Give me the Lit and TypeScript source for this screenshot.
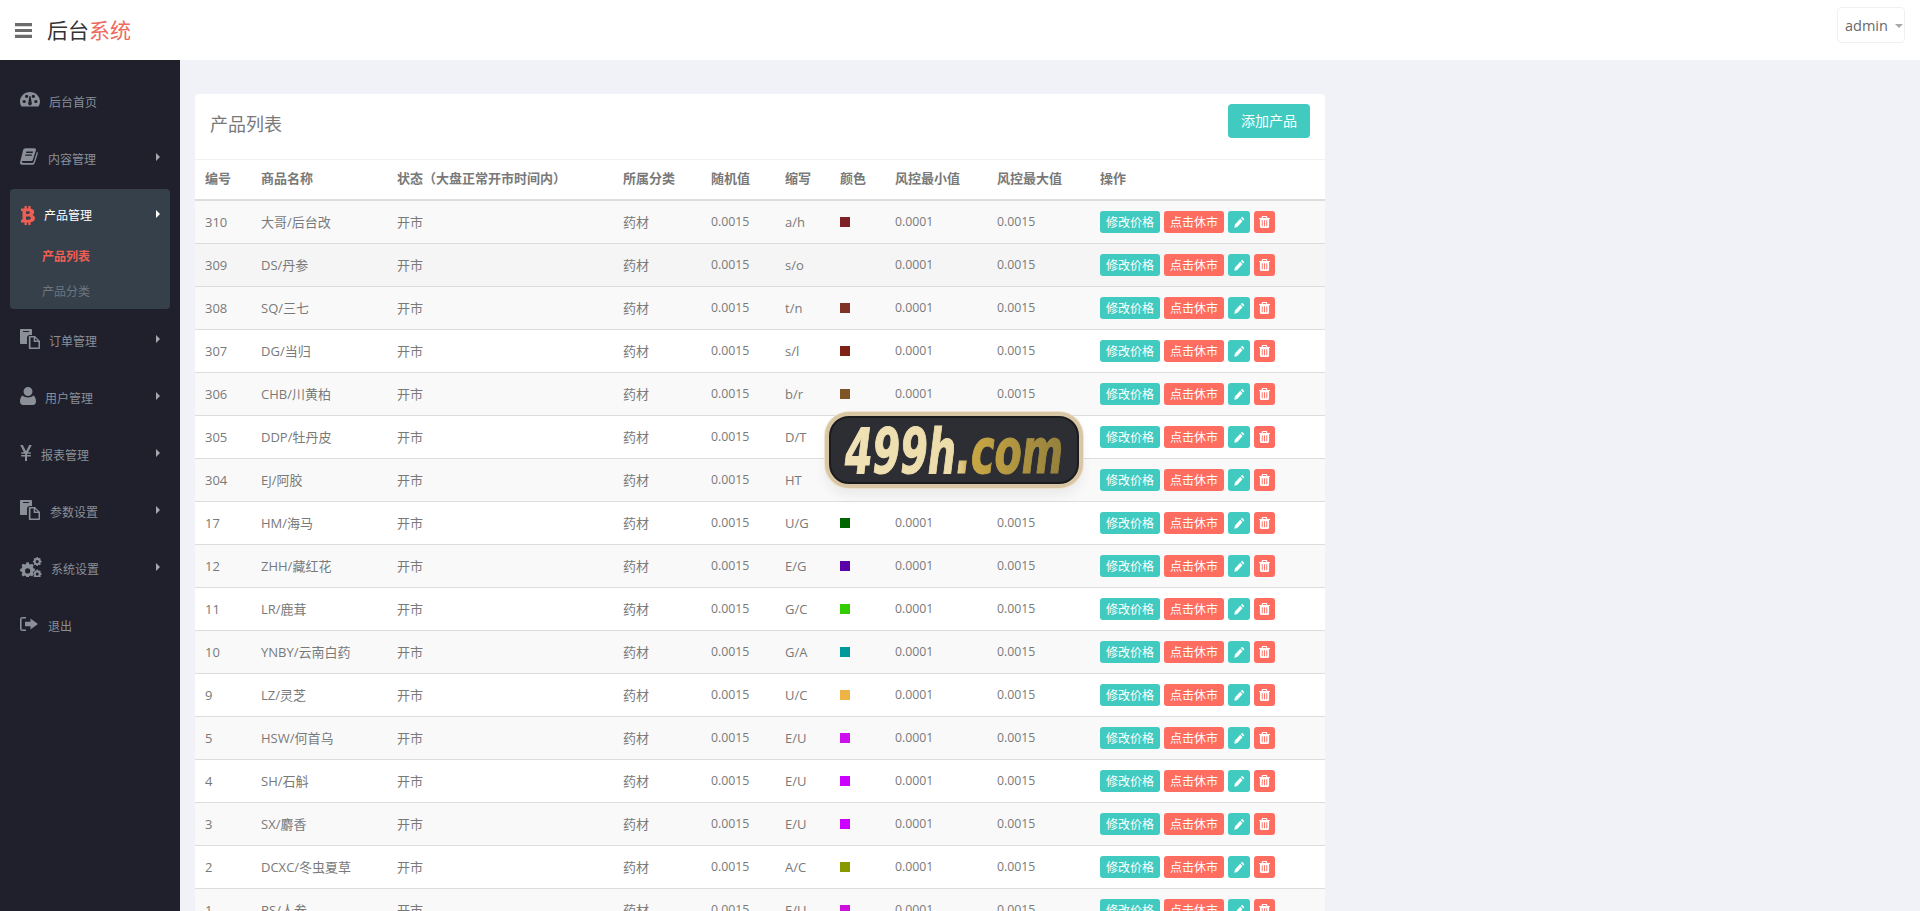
import { LitElement, html, css, svg } from "lit";
import { customElement } from "lit/decorators.js";

const ICONS: Record<string, { box: string; d: string }> = {
  bars: { box: "2 4 20 16", d: "M2 4h20v3.4H2zM2 10.300h20v3.4H2zM2 16.600h20V20H2z" },
  dashboard: {
    box: "0 1 24 19",
    d: "M12 1C5.4 1 0 6.4 0 13c0 2.3.7 4.500 1.800 6.300h20.400C23.300 17.500 24 15.300 24 13c0-6.600-5.400-12-12-12zM5 15a2 2 0 1 1 0-4 2 2 0 0 1 0 4zm3-6.500a2 2 0 1 1 0-4 2 2 0 0 1 0 4zm5.600 8.700a2.3 2.3 0 0 1-3.200 0c-.7-.7-.8-1.700-.4-2.500L11.200 6.500h1.600l1.200 8.200c.4.8.3 1.800-.4 2.500zM16 8.500a2 2 0 1 1 0-4 2 2 0 0 1 0 4zm3 6.500a2 2 0 1 1 0-4 2 2 0 0 1 0 4z",
  },
  book: {
    box: "0 0 20 20",
    d: "M19.300 4.500c.5.6.6 1.400.4 2.200l-3.300 10.800c-.4 1.300-1.700 2.300-3 2.300H2.600C1.300 19.800.2 18.900 0 17.700c0-.4 0-.7.1-1L3.400 2.500C3.700 1.200 4.900.2 6.200.2H16c1.100 0 2 .9 1.800 2l-3.300 11c-.5 1.600-1 2.200-2.500 2.200H2.900c-.3 0-.6.1-.7.3-.2.3-.2.5-.1.9.2.8 1 1 1.700 1h10c.6 0 1.100-.4 1.300-.9l3.400-11.200c.1-.4 0-.7-.1-1 .4.1.7.3.9.5zM7 4.500l-.3 1c0 .2 0 .3.2.3h6.700c.2 0 .4-.1.5-.3l.3-1c0-.2 0-.3-.2-.3H7.500c-.2 0-.4.1-.5.3zM6 7.800l-.3 1c0 .2 0 .3.2.3h6.700c.2 0 .4-.1.5-.3l.3-1c0-.2 0-.3-.2-.3H6.500c-.2 0-.4.1-.5.3z",
  },
  bitcoin: {
    box: "0 0 14 20",
    d: "M3.500 0h2.300v2.500h1.500V0h2.300v2.700c2.200.4 3.600 1.700 3.600 3.700 0 1.400-.6 2.400-1.700 3 1.600.5 2.500 1.800 2.500 3.500 0 2.400-1.800 3.900-4.400 4.200V20H7.300v-2.700H5.800V20H3.500v-2.700H0v-2.700h1.500V5.200H0V2.500h3.500zM5 5.400v3h2.300c1 0 1.600-.6 1.600-1.500s-.6-1.500-1.600-1.500zm0 5.600v3.500h2.900c1.200 0 1.900-.7 1.900-1.800S9.100 11 7.900 11z",
  },
  files: {
    box: "0 0 20 20",
    d: "M1 0h10c.6 0 1 .4 1 1v5H9.800C8.300 6 7 7.200 7 8.800V15H1c-.6 0-1-.4-1-1V1c0-.6.4-1 1-1zm2 2v1h6V2zM9.800 7H15l5 5v7c0 .6-.4 1-1 1H9.800c-.6 0-1-.4-1-1V8c0-.6.4-1 1-1zm.7 1.600v9.800h8V13h-4.800V8.600zm4.700.3v2.600h2.600z",
  },
  user: {
    box: "0 0 18 20",
    d: "M9 0a5 5 0 0 1 5 5 5 5 0 0 1-10 0 5 5 0 0 1 5-5zM3.200 9.500C4.600 11 6.600 11.700 9 11.700s4.400-.7 5.800-2.200C17 10 18 13 18 16.500c0 2.200-1.400 3.500-3.500 3.500h-11C1.400 20 0 18.700 0 16.500 0 13 1 10 3.200 9.500z",
  },
  yen: {
    box: "0 0 12 16",
    d: "M.2 0h2.600l3.200 6.300L9.200 0h2.600L8.100 7.300h2.700v1.500H7v1.100h3.800v1.500H7V16H5v-4.600H1.200V9.900H5V8.800H1.200V7.300h2.700z",
  },
  cogs: {
    box: "0 0 23 20",
    d: "M6.800 5.200h2.300l.6 1.800 1.300.5 1.700-.8 1.600 1.600-.8 1.700.5 1.300 1.800.6v2.300l-1.800.6-.5 1.300.8 1.700-1.600 1.600-1.700-.8-1.300.5-.6 1.800H6.800l-.6-1.800-1.300-.5-1.700.8-1.600-1.600.8-1.700-.5-1.300-1.800-.6v-2.300l1.800-.6.5-1.300-.8-1.700 1.600-1.600 1.700.8 1.300-.5zM8 11.200a2.700 2.700 0 1 0 0 5.400 2.700 2.700 0 0 0 0-5.400zM17.400 0h1.300l.3 1 .8.3 1-.4.900.9-.4 1 .3.8 1 .3v1.300l-1 .3-.3.8.4 1-.9.9-1-.4-.8.3-.3 1h-1.300l-.3-1-.8-.3-1 .4-.9-.9.4-1-.3-.8-1-.3V3.900l1-.3.3-.8-.4-1 .9-.9 1 .4.8-.3zM18 3a1.600 1.600 0 1 0 0 3.200A1.600 1.600 0 0 0 18 3zm-.6 9.500h1.300l.3 1 .8.3 1-.4.9.9-.4 1 .3.8 1 .3v1.300l-1 .3-.3.8.4 1-.9.9-1-.4-.8.3-.3 1h-1.300l-.3-1-.8-.3-1 .4-.9-.9.4-1-.3-.8-1-.3v-1.300l1-.3.3-.8-.4-1 .9-.9 1 .4.8-.3zm.6 3a1.600 1.600 0 1 0 0 3.200 1.600 1.600 0 0 0 0-3.200z",
  },
  signout: {
    box: "0 0 18 15",
    d: "M2.500 0H6v1.600H2.600c-.6 0-1 .4-1 1v9.800c0 .6.4 1 1 1H6V15H2.500A2.500 2.500 0 0 1 0 12.500v-10A2.500 2.500 0 0 1 2.500 0zM10.500 1.500L18 7.500l-7.500 6V10H5V5h5.500z",
  },
  pencil: {
    box: "0 0 14 14",
    d: "M10.300.8l2.900 2.900-1.500 1.500-2.900-2.900zM7.900 3.200l2.900 2.900-6.700 6.700L.4 13.600l.8-3.700z",
  },
  trash: {
    box: "0 0 12 14",
    d: "M4 0h4c.6 0 1 .4 1 1v1.400h3v1.200h-1v9c0 .8-.6 1.400-1.300 1.400H2.300C1.600 14 1 13.400 1 12.600v-9H0V2.400h3V1c0-.6.4-1 1-1zm.2 1.200v1.200h3.600V1.200zM3 5v7h1V5zm2.500 0v7h1V5zM8 5v7h1V5z",
  },
};

const icon = (name: string, cls = "") => html`<svg class="ic ${cls}" viewBox=${ICONS[name].box} preserveAspectRatio="none" fill="currentColor" aria-hidden="true">${svg`<path fill-rule="evenodd" d=${ICONS[name].d}></path>`}</svg>`;

const NAV_TOP = [
  { ic: "dashboard", label: "后台首页", cls: "i-dash", arrow: false },
  { ic: "book", label: "内容管理", cls: "i-book", arrow: true },
];
const NAV_BOTTOM = [
  { ic: "files", label: "订单管理", cls: "i-files", arrow: true },
  { ic: "user", label: "用户管理", cls: "i-user", arrow: true },
  { ic: "yen", label: "报表管理", cls: "i-yen", arrow: true },
  { ic: "files", label: "参数设置", cls: "i-files i-params", arrow: true },
  { ic: "cogs", label: "系统设置", cls: "i-cogs", arrow: true },
  { ic: "signout", label: "退出", cls: "i-out", arrow: false },
];

const ROWS = [
  ["310", "大哥/后台改", "a/h", "#7f2227"],
  ["309", "DS/丹参", "s/o", ""],
  ["308", "SQ/三七", "t/n", "#7e3326"],
  ["307", "DG/当归", "s/l", "#7e2116"],
  ["306", "CHB/川黄柏", "b/r", "#7f5427"],
  ["305", "DDP/牡丹皮", "D/T", ""],
  ["304", "EJ/阿胶", "HT", ""],
  ["17", "HM/海马", "U/G", "#006400"],
  ["12", "ZHH/藏红花", "E/G", "#5a00a8"],
  ["11", "LR/鹿茸", "G/C", "#33cc00"],
  ["10", "YNBY/云南白药", "G/A", "#009999"],
  ["9", "LZ/灵芝", "U/C", "#edb445"],
  ["5", "HSW/何首乌", "E/U", "#cc11ee"],
  ["4", "SH/石斛", "E/U", "#cc00ff"],
  ["3", "SX/麝香", "E/U", "#cc00ff"],
  ["2", "DCXC/冬虫夏草", "A/C", "#889900"],
  ["1", "RS/人参", "E/U", "#cc11dd"],
];

const HEADS = ["编号", "商品名称", "状态（大盘正常开市时间内）", "所属分类", "随机值", "缩写", "颜色", "风控最小值", "风控最大值", "操作"];
const WIDTHS = [56, 136, 226, 88, 74, 55, 55, 102, 103, 235];

@customElement("app-root")
export class AppRoot extends LitElement {
  static styles = css`
    :host {
      display: block;
      height: 100vh;
      overflow: hidden;
      background: #f0f2f7;
      color: #797979;
      font: 13px/20px "Open Sans", "Noto Sans CJK SC", sans-serif;
    }
    .ic {
      display: block;
      flex: none;
    }
    header {
      height: 60px;
      background: #fff;
      display: flex;
      align-items: center;
      padding: 0 15px;
    }
    .burger {
      width: 17px;
      height: 15px;
      color: #6c6c6c;
      margin-right: 15px;
    }
    .brand {
      font-size: 21px;
      color: #333;
      flex: 1;
    }
    .brand span {
      color: #ef6a5e;
    }
    .user {
      height: 36px;
      width: 68px;
      box-sizing: border-box;
      margin-bottom: 10px;
      border: 1px solid #f0f0f0;
      border-radius: 4px;
      display: flex;
      align-items: center;
      padding: 2px 0 0 7px;
      gap: 7px;
      font-size: 14.5px;
      color: #6a6a6a;
    }
    .user i {
      border: 4px solid transparent;
      border-top-color: #a9a9a9;
      border-bottom: 0;
    }
    .body {
      display: flex;
      height: 851px;
    }
    aside {
      width: 180px;
      flex: none;
      background: #1f202b;
      padding-top: 14px;
      box-sizing: border-box;
    }
    .item {
      height: 57px;
      display: flex;
      align-items: center;
      padding-left: 20px;
      position: relative;
      color: #8a8f98;
      font-size: 12px;
    }
    .item .ic {
      margin-bottom: 6px;
    }
    .item .arrow {
      position: absolute;
      left: 156px;
      top: 50%;
      margin-top: -7px;
      border: 4px solid transparent;
      border-left-color: #a5a8ae;
      border-right: 0;
    }
    .i-dash { width: 20px; height: 15px; margin-right: 9px; }
    .i-book { width: 18px; height: 17px; margin-right: 10px; }
    .i-files { width: 20px; height: 20px; margin-right: 9px; }
    .i-params { margin-right: 10px; }
    .i-user { width: 16px; height: 18px; margin-right: 9px; }
    .i-yen { width: 12px; height: 16px; margin-right: 9px; }
    .i-cogs { width: 22px; height: 20px; margin-right: 9px; }
    .i-out { width: 18px; height: 14px; margin-right: 10px; }
    .i-btc { width: 14px; height: 19px; margin-right: 9px; color: #ef5e53; }
    .group {
      margin: 1px 10px 4px;
      height: 120px;
      padding-top: 4px;
      box-sizing: border-box;
      background: #36404a;
      border-radius: 4px;
    }
    .group .item {
      height: 46px;
      padding-left: 11px;
      color: #fff;
    }
    .group .item .ic {
      margin-bottom: 2px;
    }
    .group .item .arrow {
      left: 146px;
      margin-top: -6px;
      border-left-color: #fff;
    }
    .sub {
      height: 35px;
      line-height: 35px;
      padding-left: 32px;
      font-size: 12px;
      color: #6d7680;
    }
    .sub.on {
      color: #ef5e53;
      font-weight: 700;
    }
    main {
      flex: 1;
      min-width: 0;
      padding: 34px 0 0 15px;
      position: relative;
    }
    .card {
      width: 1130px;
      background: #fff;
      border-radius: 4px 4px 0 0;
    }
    .head {
      height: 65px;
      box-sizing: border-box;
      padding: 0 15px 6px;
      display: flex;
      align-items: center;
      justify-content: space-between;
    }
    .head h2 {
      margin: 0;
      font-weight: 400;
      font-size: 18px;
      color: #797979;
    }
    .add {
      align-self: flex-start;
      margin-top: 10px;
      height: 34px;
      width: 82px;
      padding: 0;
      border: 0;
      border-radius: 4px;
      background: #41cac0;
      color: #fff;
      font: inherit;
      font-size: 14px;
    }
    table {
      width: 100%;
      table-layout: fixed;
      border-collapse: collapse;
    }
    th,
    td {
      padding: 0 0 0 10px;
      text-align: left;
      border-top: 1px solid #ddd;
      white-space: nowrap;
    }
    th {
      height: 39px;
      line-height: 37px;
      vertical-align: top;
      font-size: 13px;
      font-weight: 700;
      color: #797979;
      border-top-color: #f1f1f1;
      border-bottom: 2px solid #ddd;
    }
    td {
      height: 42px;
    }
    td.num {
      font-size: 12.3px;
    }
    tr:nth-child(odd) td {
      background: #f9f9f9;
    }
    tr.hover td {
      background: #f5f5f5;
    }
    .swatch {
      display: block;
      width: 10px;
      height: 10px;
    }
    .acts {
      display: flex;
      gap: 4px;
    }
    .btn {
      height: 22px;
      box-sizing: border-box;
      display: flex;
      align-items: center;
      justify-content: center;
      padding: 1px 6px 0;
      border-radius: 3px;
      color: #fff;
      font-size: 12px;
      background: #41cac0;
    }
    .btn.red {
      background: #ff6c60;
    }
    .btn.sq {
      padding: 0;
      width: 22px;
    }
    .btn.red.sq {
      width: 21px;
    }
    .btn .ic {
      width: 11px;
      height: 12px;
    }
    .badge {
      position: absolute;
      left: 645px;
      top: 352px;
      width: 258px;
      height: 76px;
      box-sizing: border-box;
      border: 4px solid #d9c6a5;
      border-radius: 24px;
      background: #2d2e33;
      box-shadow: 0 0 0 1px #efe4d0, 0 0 0 2px #1c1c1f inset, 0 8px 12px rgba(0, 0, 0, 0.06);
    }
    .badge svg {
      display: block;
      width: 100%;
      height: 100%;
    }
    .badge text {
      font: italic 700 62px "DejaVu Sans", sans-serif;
    }
  `;

  renderItem(it: { ic: string; label: string; cls: string; arrow: boolean }) {
    return html`<div class="item">
      ${icon(it.ic, it.cls)}<span>${it.label}</span>
      ${it.arrow ? html`<i class="arrow"></i>` : ""}
    </div>`;
  }

  render() {
    return html`
      <header>
        ${icon("bars", "burger")}
        <div class="brand">后台<span>系统</span></div>
        <div class="user">admin<i></i></div>
      </header>
      <div class="body">
        <aside>
          ${NAV_TOP.map((it) => this.renderItem(it))}
          <div class="group">
            <div class="item">${icon("bitcoin", "i-btc")}<span>产品管理</span><i class="arrow"></i></div>
            <div class="sub on">产品列表</div>
            <div class="sub">产品分类</div>
          </div>
          ${NAV_BOTTOM.map((it) => this.renderItem(it))}
        </aside>
        <main>
          <div class="card">
            <div class="head">
              <h2>产品列表</h2>
              <button class="add">添加产品</button>
            </div>
            <table>
              <colgroup>${WIDTHS.map((w) => html`<col style="width:${w}px" />`)}</colgroup>
              <thead>
                <tr>${HEADS.map((h) => html`<th>${h}</th>`)}</tr>
              </thead>
              <tbody>
                ${ROWS.map(
                  (r, i) => html`<tr class=${i === 1 ? "hover" : ""}>
                    <td>${r[0]}</td>
                    <td>${r[1]}</td>
                    <td>开市</td>
                    <td>药材</td>
                    <td class="num">0.0015</td>
                    <td>${r[2]}</td>
                    <td>${r[3] ? html`<span class="swatch" style="background:${r[3]}"></span>` : ""}</td>
                    <td class="num">0.0001</td>
                    <td class="num">0.0015</td>
                    <td>
                      <div class="acts">
                        <span class="btn">修改价格</span>
                        <span class="btn red">点击休市</span>
                        <span class="btn sq">${icon("pencil")}</span>
                        <span class="btn red sq">${icon("trash")}</span>
                      </div>
                    </td>
                  </tr>`,
                )}
              </tbody>
            </table>
          </div>
          <div class="badge">
            <svg viewBox="0 0 250 68">
              ${svg`<defs>
                <linearGradient id="gold" gradientUnits="userSpaceOnUse" x1="16" x2="234" y1="0" y2="0">
                  <stop offset="0" stop-color="#f0e2b6"></stop>
                  <stop offset="0.5" stop-color="#eddcaa"></stop>
                  <stop offset="0.58" stop-color="#c9a845"></stop>
                  <stop offset="1" stop-color="#94803c"></stop>
                </linearGradient>
              </defs>
              <text x="16" y="57" textLength="218" lengthAdjust="spacingAndGlyphs" fill="url(#gold)" stroke="url(#gold)" stroke-width="1.2">499h.com</text>`}
            </svg>
          </div>
        </main>
      </div>
    `;
  }
}
